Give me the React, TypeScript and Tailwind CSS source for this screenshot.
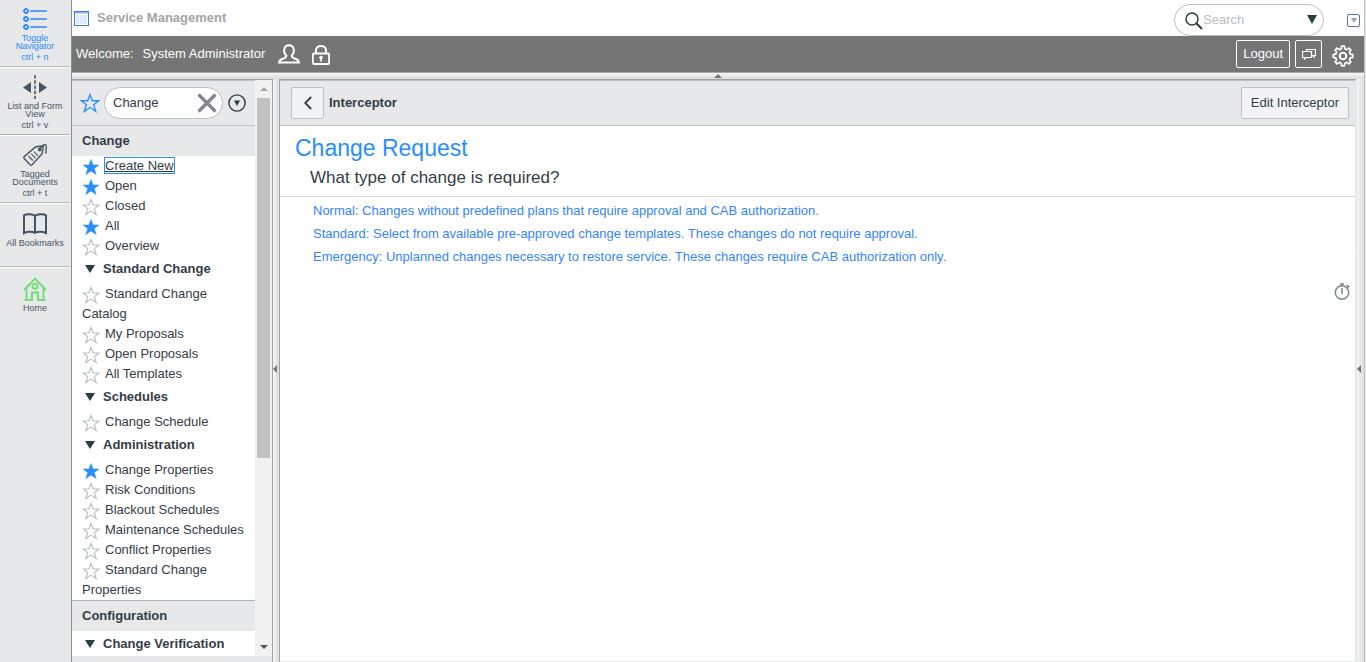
import { useState } from "react";

type Item = { label: string; starred?: boolean; current?: boolean };
type Group = { title?: string; items: Item[] };

const changeGroups: Group[] = [
  {
    items: [
      { label: "Create New", starred: true, current: true },
      { label: "Open", starred: true },
      { label: "Closed" },
      { label: "All", starred: true },
      { label: "Overview" },
    ],
  },
  {
    title: "Standard Change",
    items: [
      { label: "Standard Change Catalog" },
      { label: "My Proposals" },
      { label: "Open Proposals" },
      { label: "All Templates" },
    ],
  },
  { title: "Schedules", items: [{ label: "Change Schedule" }] },
  {
    title: "Administration",
    items: [
      { label: "Change Properties", starred: true },
      { label: "Risk Conditions" },
      { label: "Blackout Schedules" },
      { label: "Maintenance Schedules" },
      { label: "Conflict Properties" },
      { label: "Standard Change Properties" },
    ],
  },
];

const configurationGroups: Group[] = [{ title: "Change Verification", items: [] }];

const options = [
  "Normal: Changes without predefined plans that require approval and CAB authorization.",
  "Standard: Select from available pre-approved change templates. These changes do not require approval.",
  "Emergency: Unplanned changes necessary to restore service. These changes require CAB authorization only.",
];

function Star({ filled, className }: { filled?: boolean; className: string }) {
  return (
    <svg viewBox="0 0 18 18" className={className} aria-hidden="true">
      <path
        d="M9 1.5 11.1 7H16.8L12.3 10.6 14.2 16.6 9 13.1 3.8 16.6 5.7 10.6 1.2 7H6.9Z"
        fill={filled ? "currentColor" : "none"}
        stroke="currentColor"
        strokeWidth={filled ? "0.5" : "1.2"}
        strokeLinejoin="miter"
      />
    </svg>
  );
}

function NavItem({ item }: { item: Item }) {
  const [starred, setStarred] = useState(Boolean(item.starred));
  return (
    <li className="pl-2.5 pr-2 leading-5">
      <button
        type="button"
        aria-label={`Bookmark ${item.label}`}
        aria-pressed={starred}
        onClick={() => setStarred(!starred)}
        className="mr-[5px] inline-block h-[15px] align-text-bottom"
      >
        <Star filled={starred} className={starred ? "size-[18px] text-[#278efc]" : "size-[18px] text-[#bdc0c4]"} />
      </button>
      <a
        href="#"
        className={item.current ? "underline outline outline-1 outline-[#278efc]" : "hover:underline"}
      >
        {item.label}
      </a>
    </li>
  );
}

function NavGroup({ group }: { group: Group }) {
  const [open, setOpen] = useState(true);
  return (
    <div>
      {group.title && (
        <button
          type="button"
          aria-expanded={open}
          onClick={() => setOpen(!open)}
          className="flex h-7 w-full items-center gap-2 pb-[3px] pl-[13px] text-left font-bold"
        >
          <svg viewBox="0 0 10 8" className="h-2 w-2.5" aria-hidden="true">
            <path d="M0 0H10L5 8Z" fill="#293e40" />
          </svg>
          {group.title}
        </button>
      )}
      {open && (
        <ul>
          {group.items.map((item) => (
            <NavItem key={item.label} item={item} />
          ))}
        </ul>
      )}
    </div>
  );
}

function RailButton({
  lines,
  shortcut,
  className,
  children,
}: {
  lines: string[];
  shortcut?: string;
  className: string;
  children: React.ReactNode;
}) {
  return (
    <button type="button" className={`flex w-full flex-col items-center text-[9px] leading-2 ${className}`}>
      <span className="flex h-6 items-center">{children}</span>
      <span className="mt-[3px] flex flex-col items-center whitespace-nowrap">
        {lines.map((line) => (
          <span key={line}>{line}</span>
        ))}
      </span>
      {shortcut && <span className="mt-[3px] whitespace-nowrap">{shortcut}</span>}
    </button>
  );
}

function Rail() {
  return (
    <aside className="flex w-[72px] shrink-0 flex-col border-r border-[#8d8f93] bg-[#e6e8ea] pr-px text-[#485563]">
      <div className="h-[67px] border-b border-[#b0b3b7] pt-[7px]">
        <RailButton lines={["Toggle", "Navigator"]} shortcut="ctrl + n" className="text-[#2e88fb]">
          <svg viewBox="0 0 24 24" className="size-6" fill="none" stroke="currentColor">
            <g strokeWidth="1.8">
              <circle cx="3" cy="4" r="2" />
              <circle cx="3" cy="12" r="2" />
              <circle cx="3" cy="20" r="2" />
            </g>
            <path d="M7 4H24M7 12H24M7 20H24" strokeWidth="1.6" />
          </svg>
        </RailButton>
      </div>
      <div className="h-[68px] border-b border-t border-b-[#b0b3b7] border-t-white pt-[7px]">
        <RailButton lines={["List and Form", "View"]} shortcut="ctrl + v" className="">
          <svg viewBox="0 0 24 24" className="size-6" fill="currentColor">
            <path d="M8 7V18L0 12.5ZM16 7V18L24 12.5Z" />
            <path d="M12 0V24" stroke="currentColor" strokeWidth="1.6" strokeDasharray="3.5 1.7" />
          </svg>
        </RailButton>
      </div>
      <div className="h-[68px] border-b border-t border-b-[#b0b3b7] border-t-white pt-[7px]">
        <RailButton lines={["Tagged", "Documents"]} shortcut="ctrl + t" className="">
          <svg viewBox="0 0 24 24" className="size-6" fill="none" stroke="currentColor" strokeWidth="1.4">
            <path d="M1.4 13.4 12.5 4 19.5 2.8 20.4 4 19 11 9 21.8Q8 22.6 7 21.8L1.2 15.6Q.4 14.500 1.400 13.400Z" />
            <circle cx="16.800" cy="6.600" r="1.300" />
            <path d="M16.500 6.800C18.500 3 21.500 .6 22.800 1.800 23.800 3 23 7 22.800 10.500" />
            <path d="M5.500 13 9.800 17.500M8.300 10.800 12.500 15.200M11 8.600 15 12.800" strokeWidth="1.100" />
          </svg>
        </RailButton>
      </div>
      <div className="h-16 border-b border-t border-b-[#b0b3b7] border-t-white pt-2">
        <RailButton lines={["All Bookmarks"]} className="">
          <svg viewBox="0 0 24 24" className="size-6" fill="none" stroke="currentColor" strokeWidth="2">
            <path d="M12 4C10.500 1.600 3 1.800 1 3.300V21C4 19.400 10 19.400 12 21C14 19.400 20 19.400 23 21V3.300C21 1.800 13.500 1.600 12 4ZM12 4V21" />
          </svg>
        </RailButton>
      </div>
      <div className="border-t border-white pt-[9px]">
        <RailButton lines={["Home"]} className="">
          <svg viewBox="0 0 24 24" className="size-6" fill="none" stroke="#6ddf74" strokeWidth="1.900">
            <path d="M1 13 12 1.500 23 13M3.500 11V23M20.500 11V23M1.500 23H9V15.500H15V23H22.500" />
            <circle cx="12" cy="9.200" r="2.600" />
          </svg>
        </RailButton>
      </div>
    </aside>
  );
}

function Header() {
  return (
    <header className="shrink-0">
      <div className="flex h-9 items-center bg-white pl-0.5 pr-1">
        <svg viewBox="0 0 15 15" className="mr-2 size-[15px]" aria-hidden="true">
          <rect x=".5" y=".5" width="14" height="14" fill="#fff" stroke="#3f7dd8" />
          <rect x="1" y="1" width="13" height="1.500" fill="#8ab5f0" />
          <path d="M2 4H13V13H2Z" fill="#deecf8" />
          <path d="M5.500 4V13" stroke="#f2f8fd" />
        </svg>
        <h1 className="grow text-[13px] font-bold text-[#a5a5a5]">Service Management</h1>
        <div className="mr-[23px] mt-1 flex h-8 w-[150px] shrink-0 items-center rounded-full border border-[#bdc0c4] bg-white pl-2.5 pr-1.5">
          <svg viewBox="0 0 18 18" className="mt-0.5 size-[18px] shrink-0" fill="none" stroke="#293e40" aria-hidden="true">
            <circle cx="7" cy="7" r="6" strokeWidth="1.500" />
            <path d="M11.300 11.300 17 17" strokeWidth="2" />
          </svg>
          <input
            type="search"
            aria-label="Search"
            placeholder="Search"
            className="w-0 grow text-[13px] outline-none placeholder:text-[#b9bcc2]"
          />
          <button type="button" aria-label="Search options">
            <svg viewBox="0 0 10 9" className="mb-0.5 h-[9px] w-2.5">
              <path d="M0 0H10L5 9Z" fill="#293e40" />
            </svg>
          </button>
        </div>
        <button
          type="button"
          aria-label="Show banner menu"
          className="mt-1 flex size-[13px] items-center justify-center rounded-xs border border-[#5f7590] bg-white"
        >
          <svg viewBox="0 0 6 5" className="h-[5px] w-1.5">
            <path d="M.5 .5H5.500L3 4Z" fill="#a9b6c6" stroke="#7287a0" strokeWidth=".7" />
          </svg>
        </button>
      </div>
      <div className="flex h-9 items-center bg-[#757575] pl-1 pr-2.5 text-[13px] text-white">
        <span className="mr-[9px]">Welcome:</span>
        <a href="#">System Administrator</a>
        <svg viewBox="0 0 22 20" className="ml-[13px] h-5 w-[22px]" fill="none" stroke="#fff" strokeWidth="2" aria-hidden="true">
          <path d="M8.300 11.500C4.800 8.500 5.500 1.300 11 1.300S17.200 8.500 13.700 11.500C13.500 13.500 14.500 13.700 16 14.200 19.500 15.200 20.800 16 21 18.400H1C1.200 16 2.500 15.200 6 14.200 7.500 13.700 8.500 13.500 8.300 11.500Z" />
        </svg>
        <svg viewBox="0 0 20 22" className="ml-[11px] mt-0.5 h-[22px] w-5" fill="none" stroke="#fff" aria-hidden="true">
          <path d="M5 10V6.500C5 .4 15 .4 15 6.500V10" strokeWidth="2" />
          <rect x="1.900" y="9.500" width="16.200" height="10.500" rx="1" strokeWidth="1.800" />
          <circle cx="10" cy="13.500" r="1.800" fill="#fff" stroke="none" />
          <path d="M10 13.500V17.500" strokeWidth="1.800" />
        </svg>
        <div className="ml-auto flex items-center">
          <button type="button" className="h-7 rounded-xs border border-white px-1.5">
            Logout
          </button>
          <button
            type="button"
            aria-label="Open chat"
            className="ml-[5px] flex h-7 w-[27px] items-center justify-center rounded-xs border border-white"
          >
            <svg viewBox="0 0 14 12" className="h-3 w-3.5" fill="none" stroke="#fff" strokeWidth="1.200">
              <path d="M4.500 3.500V1.500H13.500V7.500H12V9L10.500 7.500H10" />
              <path d="M.5 3.500H9.500V9.500H4.500L2.500 11V9.500H.5Z" />
            </svg>
          </button>
          <button type="button" aria-label="Settings" className="ml-2.5 mt-[3px]">
            <svg viewBox="0 0 22 22" className="size-[22px]" fill="none" stroke="#fff" strokeWidth="1.700" strokeLinejoin="round">
              <path d="M9.200 3.800 9.600 1.200H12.400L12.800 3.800 14.800 4.600 16.900 3.100 18.900 5.100 17.400 7.200 18.200 9.200 20.800 9.600V12.400L18.200 12.800 17.400 14.800 18.900 16.900 16.900 18.900 14.800 17.400 12.800 18.200 12.400 20.800H9.600L9.200 18.200 7.200 17.400 5.100 18.900 3.100 16.900 4.600 14.800 3.800 12.800 1.200 12.400V9.600L3.800 9.200 4.600 7.200 3.100 5.100 5.100 3.100 7.200 4.600Z" />
              <circle cx="11" cy="11" r="3.300" strokeWidth="2" />
            </svg>
          </button>
        </div>
      </div>
      <div className="flex h-[7px] items-center justify-center border-t border-[#a5a7aa] bg-gradient-to-b from-[#f6f6f6] to-[#dcdcdc]">
        <svg viewBox="0 0 8 4" className="h-1 w-2" aria-hidden="true">
          <path d="M0 4 4 0 8 4Z" fill="#777" />
        </svg>
      </div>
    </header>
  );
}

function Navigator() {
  const [filter, setFilter] = useState("Change");
  return (
    <nav className="flex w-[201px] shrink-0 flex-col border-r border-t border-[#a0a2a6] bg-[#e6e8ea] pb-1.5">
      <div className="flex min-h-0 grow">
        <div className="min-w-0 grow overflow-hidden bg-white">
          <div className="flex h-[46px] items-center border-b border-t border-[#bdc0c4] bg-[#e6e8ea] pl-2">
            <button type="button" aria-label="Show bookmarks only" className="text-[#278efc]">
              <Star className="size-5" />
            </button>
            <div className="ml-1 flex h-8 w-[119px] items-center rounded-full border border-[#bdc0c4] bg-white pl-2 pr-[5px]">
              <input
                type="text"
                aria-label="Filter navigator"
                value={filter}
                onChange={(e) => setFilter(e.target.value)}
                className="w-0 grow text-[13px] outline-none"
              />
              <button type="button" aria-label="Clear filter" onClick={() => setFilter("")}>
                <svg viewBox="0 0 20 20" className="size-5" stroke="#81878e" strokeWidth="3.200">
                  <path d="M1.500 1.500 18.500 18.500M18.500 1.500 1.500 18.500" />
                </svg>
              </button>
            </div>
            <button type="button" aria-label="Navigator options" className="ml-[5px]">
              <svg viewBox="0 0 18 18" className="size-[18px]" aria-hidden="true">
                <circle cx="9" cy="9" r="8.100" fill="none" stroke="#293e40" strokeWidth="1.400" />
                <path d="M6 6.500H12L9 12Z" fill="#293e40" />
              </svg>
            </button>
          </div>
          <h2 className="h-[30px] bg-[#e6e8ea] pl-2.5 font-bold leading-[30px]">Change</h2>
          {changeGroups.map((group, i) => (
            <NavGroup key={i} group={group} />
          ))}
          <h2 className="h-[31px] border-t border-[#b0b3b7] bg-[#e6e8ea] pl-2.5 font-bold leading-[30px]">
            Configuration
          </h2>
          {configurationGroups.map((group, i) => (
            <NavGroup key={i} group={group} />
          ))}
        </div>
        <div className="flex w-[17px] shrink-0 flex-col items-center bg-[#f1f1f1]" aria-hidden="true">
          <span className="flex h-[18px] shrink-0 items-center">
            <svg viewBox="0 0 8 4" className="h-1 w-2">
              <path d="M0 4 4 0 8 4Z" fill="#a3a3a3" />
            </svg>
          </span>
          <span className="h-[360px] w-[13px] shrink bg-[#c1c1c1]" />
          <span className="mt-auto flex h-[18px] shrink-0 items-center">
            <svg viewBox="0 0 8 4" className="h-1 w-2">
              <path d="M0 0H8L4 4Z" fill="#505050" />
            </svg>
          </span>
        </div>
      </div>
    </nav>
  );
}

function SideHandle({ className }: { className: string }) {
  return (
    <div className={`flex shrink-0 items-center bg-gradient-to-r from-[#f6f6f6] to-[#dcdcdc] pb-1 ${className}`}>
      <svg viewBox="0 0 4 8" className="h-2 w-1" aria-hidden="true">
        <path d="M4 0V8L0 4Z" fill="#777" />
      </svg>
    </div>
  );
}

function Content() {
  return (
    <main className="flex min-w-0 grow flex-col border-b border-l border-r-2 border-t border-b-[#e6e8ea] border-l-[#a0a2a6] border-r-[#e6e8ea] border-t-[#a0a2a6] bg-white">
      <div className="flex h-[46px] shrink-0 items-center border-b border-t border-[#bdc0c4] bg-[#e6e8ea] pl-[11px] pr-1.5">
        <button
          type="button"
          aria-label="Back"
          className="flex h-8 w-[33px] items-center justify-center rounded-xs border border-[#bdc0c4] bg-[#f1f3f4]"
        >
          <svg viewBox="0 0 8 14" className="h-3.5 w-2" fill="none" stroke="#293e40" strokeWidth="1.800">
            <path d="M7.200 1 1.200 7 7.200 13" />
          </svg>
        </button>
        <h2 className="ml-[5px] grow font-bold">Interceptor</h2>
        <button type="button" className="h-8 rounded-xs border border-[#bdc0c4] bg-[#f1f3f4] px-[9px]">
          Edit Interceptor
        </button>
      </div>
      <div className="border-b border-[#dadcde] pb-1.5 pt-2">
        <h3 className="pl-[15px] text-[23px] leading-7 text-[#278efc]">Change Request</h3>
        <p className="mt-1 pl-[30px] text-[17px] leading-6">What type of change is required?</p>
      </div>
      <ul className="pl-[33px] pt-0.5 leading-[23px] text-[#3585fa]">
        {options.map((option) => (
          <li key={option}>
            <a href="#" className="hover:underline">
              {option}
            </a>
          </li>
        ))}
      </ul>
      <button type="button" aria-label="Response time" className="mr-[5px] mt-[15px] self-end">
        <svg viewBox="0 0 16 17" className="h-[17px] w-4" fill="none" stroke="#81878e" strokeWidth="1.500">
          <circle cx="8" cy="9.500" r="6.700" />
          <path d="M6 1H10M8 1V3M13 4.500 14.500 3M12.500 2 15.500 4" />
          <path d="M8 5V11" strokeWidth="1.600" />
        </svg>
      </button>
    </main>
  );
}

export default function App() {
  return (
    <div className="flex h-screen overflow-hidden bg-[#e6e8ea] font-['Liberation_Sans',Arial,sans-serif] text-[13px] text-[#343d47]">
      <Rail />
      <div className="flex min-w-0 grow flex-col border-r border-[#bdc0c4]">
        <Header />
        <div className="flex min-h-0 grow">
          <Navigator />
          <SideHandle className="w-1.5" />
          <Content />
          <SideHandle className="w-[7px]" />
        </div>
      </div>
      <div className="w-px shrink-0 bg-[#e6e8ea]" />
    </div>
  );
}
